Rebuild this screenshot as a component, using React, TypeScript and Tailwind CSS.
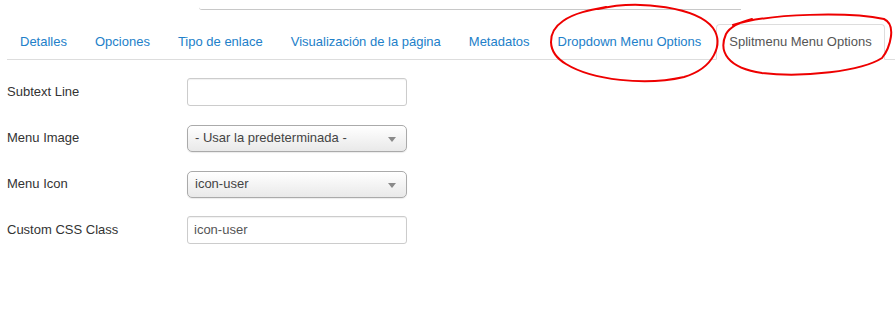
import React from 'react';

const tabs = [
  'Detalles',
  'Opciones',
  'Tipo de enlace',
  'Visualización de la página',
  'Metadatos',
  'Dropdown Menu Options',
];

const Caret: React.FC = () => (
  <svg width="8" height="5" viewBox="0 0 8 5" className="absolute right-[10px] top-[11px]">
    <path d="M0 0 L8 0 L4 5 Z" fill="#8a8a8a" />
  </svg>
);

const TextField: React.FC<{ value?: string }> = ({ value }) => (
  <div className="w-[220px] h-[28px] border border-[#cccccc] rounded-[3px] bg-white px-[6px] flex items-center text-[13px] text-[#555555] shadow-[inset_0_1px_1px_rgba(0,0,0,0.06)]">
    {value}
  </div>
);

const SelectField: React.FC<{ value: string }> = ({ value }) => (
  <div className="relative w-[220px] h-[27px] border border-[#aaaaaa] rounded-[5px] bg-gradient-to-b from-white to-[#e9e9e9] px-[7px] flex items-center text-[13px] text-[#444444] shadow-[0_1px_1px_rgba(0,0,0,0.08)]">
    {value}
    <Caret />
  </div>
);

const rows: { label: string; field: React.ReactNode }[] = [
  { label: 'Subtext Line', field: <TextField /> },
  { label: 'Menu Image', field: <SelectField value="- Usar la predeterminada -" /> },
  { label: 'Menu Icon', field: <SelectField value="icon-user" /> },
  { label: 'Custom CSS Class', field: <TextField value="icon-user" /> },
];

const App: React.FC = () => {
  return (
    <div className="relative w-[895px] h-[324px] bg-white overflow-hidden font-['Liberation_Sans',Arial,sans-serif]">
      {/* bottom edge of the input above, scrolled out of view */}
      <div className="ml-[199px] w-[542px] h-[10px] border-b border-[#c8c8c8] rounded-bl-[3px]" />

      <ul className="mt-[14px] ml-[7px] flex border-b border-[#dddddd] text-[13px] leading-[18px]">
        {tabs.map((t) => (
          <li key={t} className="mr-[2px] -mb-px">
            <a className="block px-[12px] py-[8px] border border-transparent rounded-t-[4px] text-[#2280c9] whitespace-nowrap">
              {t}
            </a>
          </li>
        ))}
        <li className="mr-[2px] -mb-px">
          <a className="block px-[12px] py-[8px] border border-[#dddddd] border-b-white bg-white rounded-t-[4px] text-[#555555] whitespace-nowrap">
            Splitmenu Menu Options
          </a>
        </li>
      </ul>

      <div className="mt-[18px] ml-[7px] flex flex-col gap-[18px]">
        {rows.map((r) => (
          <div key={r.label} className="flex items-center h-[28px]">
            <div className="w-[180px] text-[13px] text-[#333333]">{r.label}</div>
            {r.field}
          </div>
        ))}
      </div>

      {/* hand-drawn red marks */}
      <svg className="absolute inset-0 pointer-events-none" width="895" height="324" viewBox="0 0 895 324">
        <path
          d="M598 9 C640 -1 698 8 713 28 C724 44 714 68 684 77 C645 86 592 80 566 64 C546 52 547 32 563 21 C574 13 590 10 606 7"
          fill="none"
          stroke="#ee0000"
          strokeWidth="2"
          strokeLinecap="round"
        />
        <path
          d="M733 25 C770 13 850 12 884 19 C897 25 890 48 882 58 C862 71 803 78 762 73 C728 68 718 52 726 34 C730 27 740 22 752 19"
          fill="none"
          stroke="#ee0000"
          strokeWidth="2"
          strokeLinecap="round"
        />
      </svg>
    </div>
  );
};

export default App;
